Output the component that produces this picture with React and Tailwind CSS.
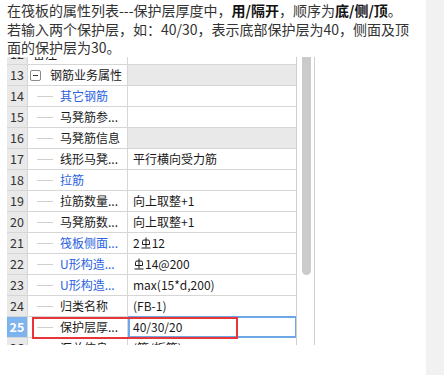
import React from 'react';

// ── Glyph: rebar grade symbol (三级钢) ─────────────────────────────────────────
const Rebar = () => (
  <svg width="10" height="12" viewBox="0 0 10 12" className="inline-block align-[-1px] mx-[1px]">
    <path d="M5 0.5V10.5M1.5 7.5V4.5Q1.5 3 3 3H7Q8.5 3 8.5 4.5V7.5H1.5M0.5 11H9.5" stroke="#1a1a1a" strokeWidth="1" fill="none" />
  </svg>
);

// ── Rows of the property grid ────────────────────────────────────────────────
const ROWS = [
  { n: 12, name: '备注', level: 0 },
  { n: 13, name: '钢筋业务属性', level: 0, group: true },
  { n: 14, name: '其它钢筋', blue: true },
  { n: 15, name: '马凳筋参...' },
  { n: 16, name: '马凳筋信息', grey: true },
  { n: 17, name: '线形马凳...', value: '平行横向受力筋' },
  { n: 18, name: '拉筋', blue: true },
  { n: 19, name: '拉筋数量...', value: '向上取整+1' },
  { n: 20, name: '马凳筋数...', value: '向上取整+1' },
  { n: 21, name: '筏板侧面...', blue: true, value: <>2<Rebar />12</> },
  { n: 22, name: 'U形构造...', blue: true, value: <><Rebar />14@200</> },
  { n: 23, name: 'U形构造...', blue: true, value: 'max(15*d,200)' },
  { n: 24, name: '归类名称', value: '(FB-1)' },
  { n: 25, name: '保护层厚...', value: '40/30/20', selected: true },
  { n: 26, name: '汇总信息', value: '(箍/板筋)' },
];

const Row = ({ row }) => {
  const top = row.level === 0;
  return (
    <div className="flex h-[21px]">
      {/* numéro */}
      <div className={`w-[21px] shrink-0 border-b border-r border-[#d6d6d6] flex items-center justify-center text-[12.5px] ${row.selected ? 'bg-[#7db3ee] text-white font-bold' : 'bg-[#e9e9e9] text-[#333]'}`}>
        {row.n}
      </div>
      {/* nom */}
      <div className="relative w-[100px] shrink-0 border-b border-r border-[#d6d6d6] flex items-center bg-white">
        {row.group && (
          <span className="ml-[2px] w-[11px] h-[11px] border border-[#8a8a8a] rounded-[2px] flex items-center justify-center">
            <span className="w-[5px] h-px bg-[#333]" />
          </span>
        )}
        {!top && <span className="ml-[9px] w-[16px] h-px bg-[#d0d0d0]" />}
        <span className={`${row.group ? 'ml-[9px]' : top ? 'ml-[5px]' : 'ml-[7px]'} text-[12px] whitespace-nowrap ${row.blue ? 'text-[#2a62e0]' : 'text-[#1a1a1a]'}`}>
          {row.name}
        </span>
        {row.selected && (
          <span className="absolute left-[4px] top-[-0.5px] w-[206px] h-[22px] border-2 border-[#e8353a] z-10" />
        )}
      </div>
      {/* valeur */}
      <div className={`relative w-[169px] shrink-0 border-b border-[#d6d6d6] flex items-center pl-[5px] text-[12px] text-[#1a1a1a] whitespace-nowrap ${row.group || row.grey ? 'bg-[#e9e9e9]' : 'bg-white'}`}>
        {row.selected && <span className="absolute inset-x-0 top-[-1px] bottom-[-1px] border-2 border-[#6ea7e6]" />}
        <span className="relative">{row.value}</span>
      </div>
    </div>
  );
};

export default function App() {
  return (
    <div className="flex w-[444px] h-[375px] overflow-hidden bg-white font-['Noto_Sans_CJK_SC',sans-serif]">
      <div className="w-[426px] shrink-0">
        {/* ── Texte d'aide ─────────────────────────────────────────────────── */}
        <p className="pl-[7px] pt-[1px] text-[14px] leading-[18.5px] text-[#333] h-[57px] whitespace-nowrap">
          在筏板的属性列表---保护层厚度中，<b className="text-[#111]">用/隔开</b>，顺序为<b className="text-[#111]">底/侧/顶</b>。
          <br />
          若输入两个保护层，如：40/30，表示底部保护层为40，侧面及顶
          <br />
          面的保护层为30。
        </p>

        {/* ── Grille de propriétés ─────────────────────────────────────────── */}
        <div className="flex h-[288px]">
          <div className="relative ml-[7px] w-[290px] h-full overflow-hidden border-r border-[#cfcfcf]">
            <div className="absolute left-[28px] top-[20px] bottom-0 w-px bg-[#ececec]" />
            <div className="mt-[-13px] relative">
              {ROWS.map((r) => <Row key={r.n} row={r} />)}
            </div>
          </div>
          {/* barre de défilement */}
          <div className="ml-[5px] w-[9px] h-[218px] bg-[#cbcbcb] rounded-b-[5px]" />
          <div className="ml-[3px] w-px h-full bg-[#cfcfcf]" />
        </div>
      </div>
      <div className="flex-1 bg-[#f1f1f1]" />
    </div>
  );
}
